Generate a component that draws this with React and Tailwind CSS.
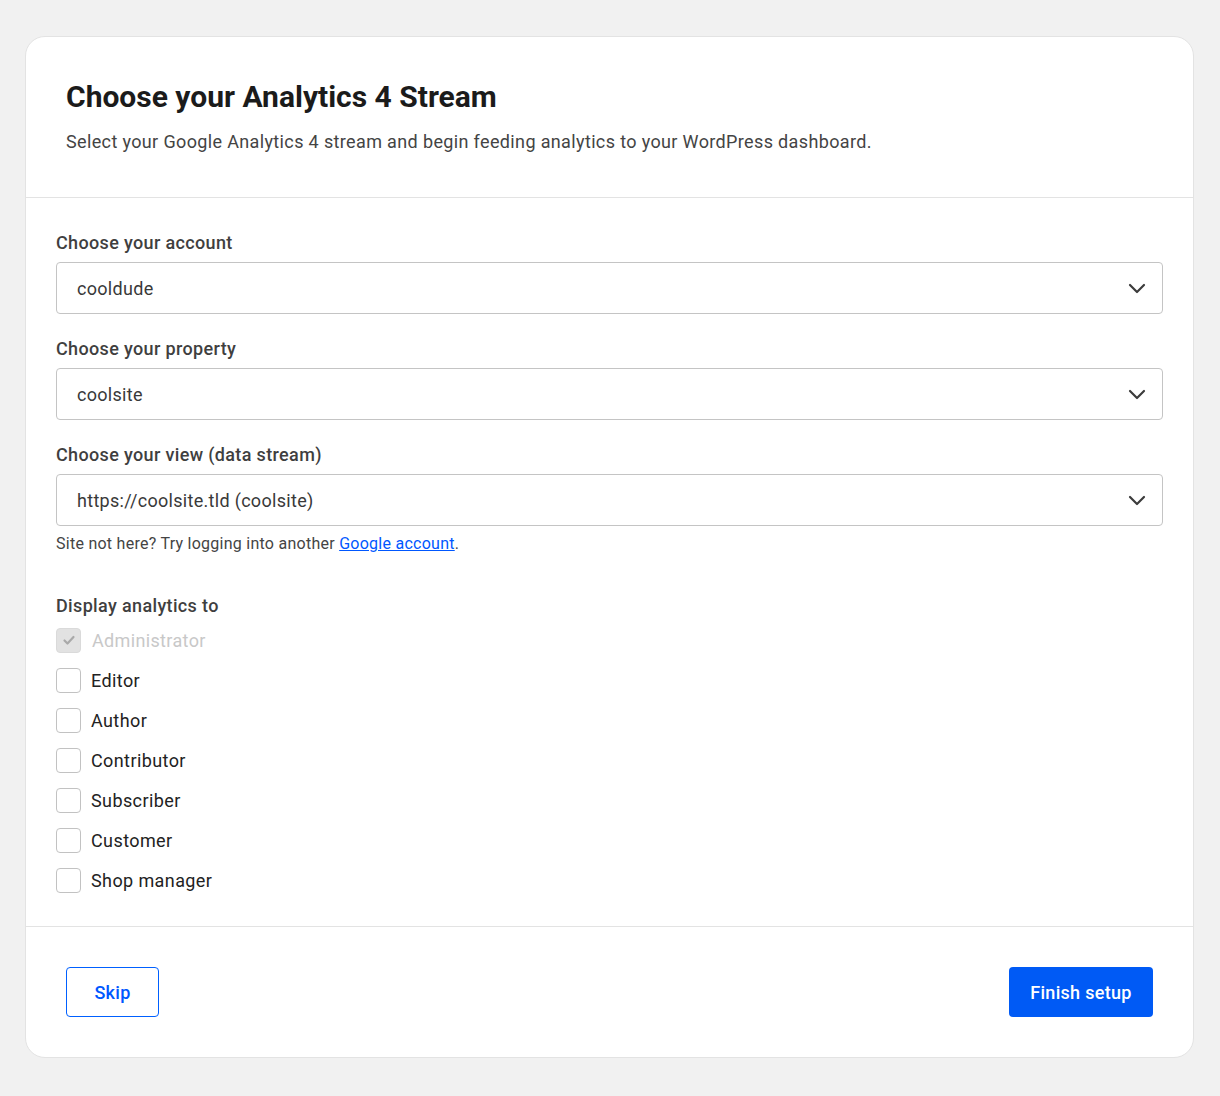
import { useState } from "react";

const roles = ["Editor", "Author", "Contributor", "Subscriber", "Customer", "Shop manager"];

const Chevron = () => (
  <svg width="20" height="20" viewBox="0 0 20 20" fill="none" className="absolute right-[16px] top-1/2 -translate-y-1/2 pointer-events-none">
    <path d="M3 7l7 7 7-7" stroke="#3c3c3c" strokeWidth="2.2" strokeLinecap="round" strokeLinejoin="round" />
  </svg>
);

const Select = ({ label, value }) => (
  <div className="flex flex-col">
    <label className="pt-[1px] text-[18px] leading-[28px] font-medium text-[#3f3f3f] tracking-[0.35px]">{label}</label>
    <div className="relative mt-[5px]">
      <div className="h-[52px] w-full rounded-[4px] border border-[#c4c4c4] bg-white px-[20px] flex items-center text-[18px] text-[#393939] tracking-[0.3px]">
        {value}
      </div>
      <Chevron />
    </div>
  </div>
);

export default function App() {
  const [checked, setChecked] = useState({});

  return (
    <div className="min-h-[1096px] bg-[#f1f1f1] pt-[36px] px-[25px] font-['Roboto',sans-serif]">
      <div className="w-[1169px] bg-white border border-[#e3e3e3] rounded-[20px]">
        {/* header */}
        <div className="px-[40px] pt-[40px] pb-[41px] border-b border-[#e3e3e3]">
          <h1 className="text-[30px] leading-[40px] font-bold text-[#1b1b1b]">Choose your Analytics 4 Stream</h1>
          <p className="mt-[11px] text-[18px] leading-[28px] text-[#444] tracking-[0.36px]">
            Select your Google Analytics 4 stream and begin feeding analytics to your WordPress dashboard.
          </p>
        </div>

        {/* body */}
        <div className="px-[30px] pt-[30px] pb-[26px] border-b border-[#e3e3e3]">
          <div className="flex flex-col gap-[20px]">
            <Select label="Choose your account" value="cooldude" />
            <Select label="Choose your property" value="coolsite" />
            <div>
              <Select label="Choose your view (data stream)" value="https://coolsite.tld (coolsite)" />
              <p className="mt-[6px] text-[16px] leading-[24px] text-[#444] tracking-[0.26px]">
                Site not here? Try logging into another{" "}
                <a href="#" className="text-[#0057ff] underline">Google account</a>.
              </p>
            </div>
          </div>

          <div className="mt-[36px]">
            <div className="text-[18px] leading-[28px] font-medium text-[#3f3f3f] tracking-[0.35px]">Display analytics to</div>
            <div className="flex flex-col">
              <div className="h-[40px] flex items-center gap-[11px]">
                <span className="w-[25px] h-[25px] rounded-[4px] bg-[#e2e2e2] border border-[#dadada] flex items-center justify-center">
                  <svg width="14" height="14" viewBox="0 0 14 14" fill="none">
                    <path d="M2.5 7.5l3 3 6-6.5" stroke="#a9a9a9" strokeWidth="2.2" strokeLinecap="round" strokeLinejoin="round" />
                  </svg>
                </span>
                <span className="text-[18px] text-[#c8c8c8] tracking-[0.35px]">Administrator</span>
              </div>
              {roles.map((r) => (
                <label key={r} className="h-[40px] flex items-center gap-[10px] cursor-pointer">
                  <span
                    onClick={() => setChecked({ ...checked, [r]: !checked[r] })}
                    className={`w-[25px] h-[25px] rounded-[4px] border ${checked[r] ? "bg-[#005af0] border-[#005af0]" : "bg-white border-[#c2c2c2]"}`}
                  />
                  <span className="text-[18px] text-[#222] tracking-[0.4px]">{r}</span>
                </label>
              ))}
            </div>
          </div>
        </div>

        {/* footer */}
        <div className="px-[40px] py-[40px] flex justify-between items-center">
          <button className="h-[50px] w-[93px] rounded-[4px] border border-[#0060ff] text-[#0057ff] text-[18px] font-medium tracking-[0.3px]">
            Skip
          </button>
          <button className="h-[50px] w-[144px] rounded-[4px] bg-[#005af5] text-white text-[18px] font-medium tracking-[0.3px]">
            Finish setup
          </button>
        </div>
      </div>
    </div>
  );
}
